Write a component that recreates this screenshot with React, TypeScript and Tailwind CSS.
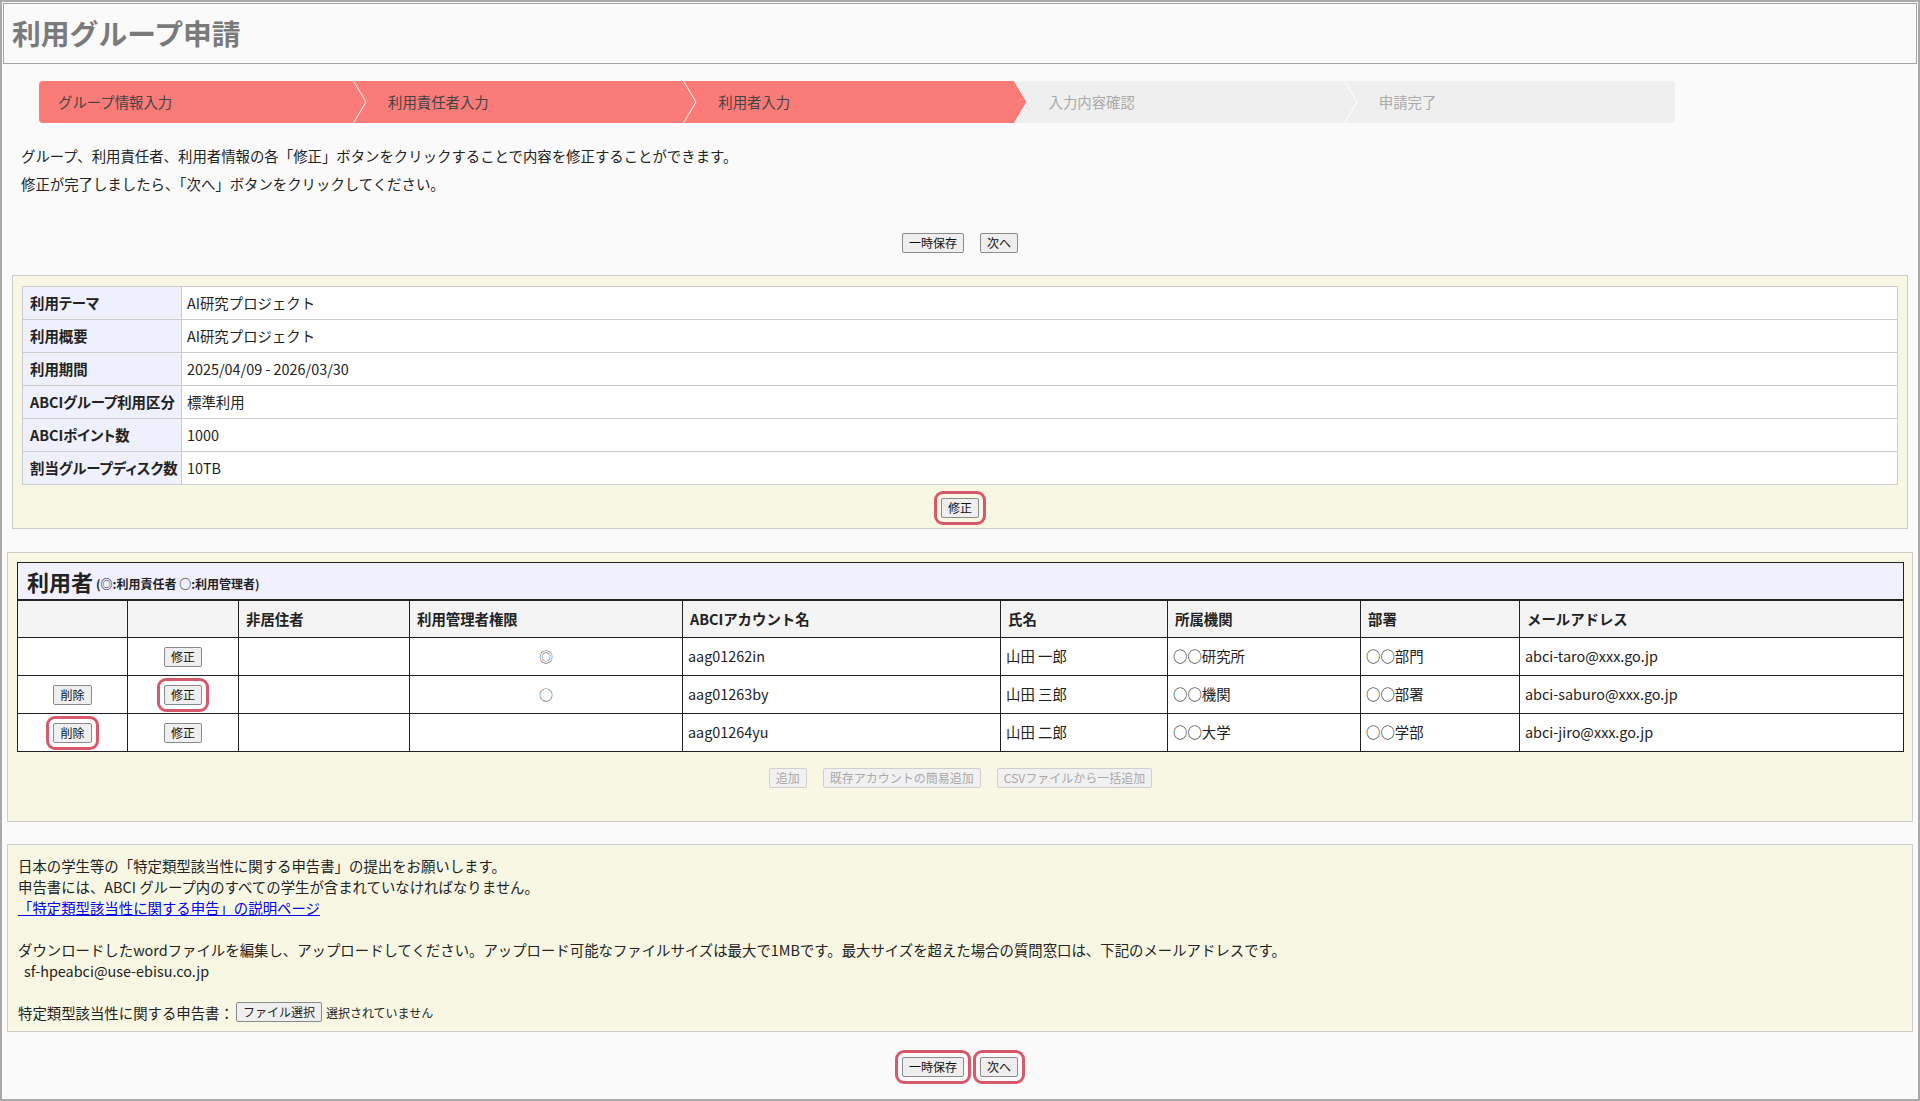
import type { ReactNode } from "react";

const steps = ["グループ情報入力", "利用責任者入力", "利用者入力", "入力内容確認", "申請完了"];

const groupInfo = [
  { label: "利用テーマ", value: "AI研究プロジェクト" },
  { label: "利用概要", value: "AI研究プロジェクト" },
  { label: "利用期間", value: "2025/04/09 - 2026/03/30" },
  { label: "ABCIグループ利用区分", value: "標準利用" },
  { label: "ABCIポイント数", value: "1000" },
  { label: "割当グループディスク数", value: "10TB" },
];

const users = [
  { canDelete: false, markDelete: false, markEdit: false, role: "◎", account: "aag01262in", name: "山田 一郎", org: "○○研究所", dept: "○○部門", mail: "abci-taro@xxx.go.jp" },
  { canDelete: true, markDelete: false, markEdit: true, role: "○", account: "aag01263by", name: "山田 三郎", org: "○○機関", dept: "○○部署", mail: "abci-saburo@xxx.go.jp" },
  { canDelete: true, markDelete: true, markEdit: false, role: "", account: "aag01264yu", name: "山田 二郎", org: "○○大学", dept: "○○学部", mail: "abci-jiro@xxx.go.jp" },
];

function Btn({ children, mark = false, disabled = false }: { children: ReactNode; mark?: boolean; disabled?: boolean }) {
  return (
    <button
      className={`h-[20px] rounded-[2px] border px-[6px] text-[12px] leading-[18px] ${
        disabled
          ? "border-[#cfcfcf] bg-[#f1f1f1] text-[#a8a8a8]"
          : "border-[#8a8a8a] bg-[#efefef] text-[#111]"
      } ${mark ? "outline-[3px] outline-offset-[4px] outline-[#d65a6c] outline-solid" : ""}`}
    >
      {children}
    </button>
  );
}

export default function App() {
  return (
    <div className="box-border h-[1101px] w-full overflow-hidden border-2 border-[#a9a9a9] bg-[#fafafa] font-['Noto_Sans_CJK_JP','Noto_Sans',sans-serif] text-[#222]">
      {/* タイトル */}
      <div className="mx-px mt-px flex h-[61px] items-center border border-[#a3a3a3] pl-[8px]">
        <h1 className="text-[28.8px] font-bold leading-none text-[#7a7a7a]">利用グループ申請</h1>
      </div>

      {/* ステップ */}
      <div className="ml-[37px] mt-[17px] flex h-[42px] w-[1636px] overflow-hidden rounded-[4px] bg-[#efefef]">
        {steps.map((s, i) => (
          <div
            key={s}
            className={`relative flex items-center text-[14.4px] ${i === 0 ? "w-[315px] pl-[19px]" : "flex-1 pl-[34px]"} ${
              i < 3 ? "bg-[#fa7b78] text-[#444]" : "text-[#aaa]"
            }`}
          >
            {s}
            {i < 4 && (
              <svg className="absolute right-[-13px] top-0 z-10 h-[42px] w-[14px]" viewBox="0 0 14 42">
                <path d="M0 0 L13 21 L0 42 Z" fill={i < 3 ? "#fa7b78" : "#efefef"} />
                <path d="M0.5 0 L13 21 L0.5 42" fill="none" stroke="#ffffff" strokeWidth="1" />
              </svg>
            )}
          </div>
        ))}
      </div>

      {/* 説明 */}
      <div className="mt-[19px] pl-[19px] text-[14.4px] leading-[28px] text-[#222]">
        <p>グループ、利用責任者、利用者情報の各「修正」ボタンをクリックすることで内容を修正することができます。</p>
        <p>修正が完了しましたら、「次へ」ボタンをクリックしてください。</p>
      </div>

      <div className="mt-[35px] flex justify-center gap-4">
        <Btn>一時保存</Btn>
        <Btn>次へ</Btn>
      </div>

      {/* グループ情報 */}
      <div className="mx-[10px] mt-[22px] border border-[#cccccc] bg-[#f8f7e3] px-[9px] pb-[10px] pt-[10px]">
        <table className="w-full table-fixed border-collapse border border-[#cccccc] text-[14.4px]">
          <colgroup>
            <col className="w-[159px]" />
            <col />
          </colgroup>
          <tbody>
            {groupInfo.map((r) => (
              <tr key={r.label} className="h-[33px]">
                <td className="whitespace-nowrap border border-[#cccccc] bg-[#eef0fb] px-[7px] font-bold [font-feature-settings:'palt']">
                  {r.label}
                </td>
                <td className="border border-[#cccccc] bg-white px-[5px]">{r.value}</td>
              </tr>
            ))}
          </tbody>
        </table>
        <div className="mt-[13px] flex justify-center">
          <Btn mark>修正</Btn>
        </div>
      </div>

      {/* 利用者 */}
      <div className="mx-[5px] mt-[23px] border border-[#cccccc] bg-[#f8f7e3] pb-[33px] pl-[9px] pr-[8px] pt-[9px]">
        <div className="flex h-[37px] items-center border-x border-t border-[#222] bg-[#f0f0ff] pl-[9px]">
          <span className="text-[22px] font-bold leading-none">利用者</span>
          <span className="ml-[3px] mt-[6px] text-[12px] font-bold">(◎:利用責任者 ○:利用管理者)</span>
        </div>
        <table className="w-full table-fixed border-collapse border border-[#222] text-[14.4px]">
          <colgroup>
            <col className="w-[110px]" />
            <col className="w-[111px]" />
            <col className="w-[171px]" />
            <col className="w-[273px]" />
            <col className="w-[318px]" />
            <col className="w-[167px]" />
            <col className="w-[193px]" />
            <col className="w-[159px]" />
            <col />
          </colgroup>
          <thead>
            <tr className="h-[37px] bg-[#f4f4f4] text-left font-bold">
              <th className="border border-t-2 border-[#222]" />
              <th className="border border-t-2 border-[#222]" />
              <th className="border border-t-2 border-[#222] px-[7px]">非居住者</th>
              <th className="border border-t-2 border-[#222] px-[7px]">利用管理者権限</th>
              <th className="border border-t-2 border-[#222] px-[7px]">ABCIアカウント名</th>
              <th className="border border-t-2 border-[#222] px-[7px]">氏名</th>
              <th className="border border-t-2 border-[#222] px-[7px]">所属機関</th>
              <th className="border border-t-2 border-[#222] px-[7px]">部署</th>
              <th className="border border-t-2 border-[#222] px-[7px]">メールアドレス</th>
            </tr>
          </thead>
          <tbody>
            {users.map((u) => (
              <tr key={u.account} className="h-[38px] bg-white">
                <td className="border border-[#222] text-center">{u.canDelete && <Btn mark={u.markDelete}>削除</Btn>}</td>
                <td className="border border-[#222] text-center">
                  <Btn mark={u.markEdit}>修正</Btn>
                </td>
                <td className="border border-[#222]" />
                <td className="border border-[#222] text-center text-[14px] text-[#555]">{u.role}</td>
                <td className="border border-[#222] px-[5px]">{u.account}</td>
                <td className="border border-[#222] px-[5px]">{u.name}</td>
                <td className="border border-[#222] px-[5px]">{u.org}</td>
                <td className="border border-[#222] px-[5px]">{u.dept}</td>
                <td className="border border-[#222] px-[5px]">{u.mail}</td>
              </tr>
            ))}
          </tbody>
        </table>
        <div className="mt-[16px] flex justify-center gap-4">
          <Btn disabled>追加</Btn>
          <Btn disabled>既存アカウントの簡易追加</Btn>
          <Btn disabled>CSVファイルから一括追加</Btn>
        </div>
      </div>

      {/* 申告書 */}
      <div className="mx-[5px] mt-[22px] border border-[#cccccc] bg-[#f8f7e3] pb-[8px] pl-[10px] pt-[10px] text-[14.4px] leading-[21px]">
        <p>日本の学生等の「特定類型該当性に関する申告書」の提出をお願いします。</p>
        <p>申告書には、ABCI グループ内のすべての学生が含まれていなければなりません。</p>
        <p>
          <a href="#" className="text-[#0000ee] underline">
            「特定類型該当性に関する申告」の説明ページ
          </a>
        </p>
        <p className="h-[21px]" />
        <p>
          ダウンロードしたwordファイルを編集し、アップロードしてください。アップロード可能なファイルサイズは最大で1MBです。最大サイズを超えた場合の質問窓口は、下記のメールアドレスです。
        </p>
        <p className="pl-[6px]">sf-hpeabci@use-ebisu.co.jp</p>
        <p className="h-[21px]" />
        <div className="flex h-[21px] items-center">
          <span>特定類型該当性に関する申告書：</span>
          <button className="ml-[2px] h-[20px] rounded-[2px] border border-[#8a8a8a] bg-[#efefef] px-[6px] text-[12px] leading-[18px]">
            ファイル選択
          </button>
          <span className="ml-[4px] text-[12px]">選択されていません</span>
        </div>
      </div>

      <div className="mt-[25px] flex justify-center gap-4">
        <Btn mark>一時保存</Btn>
        <Btn mark>次へ</Btn>
      </div>
    </div>
  );
}
